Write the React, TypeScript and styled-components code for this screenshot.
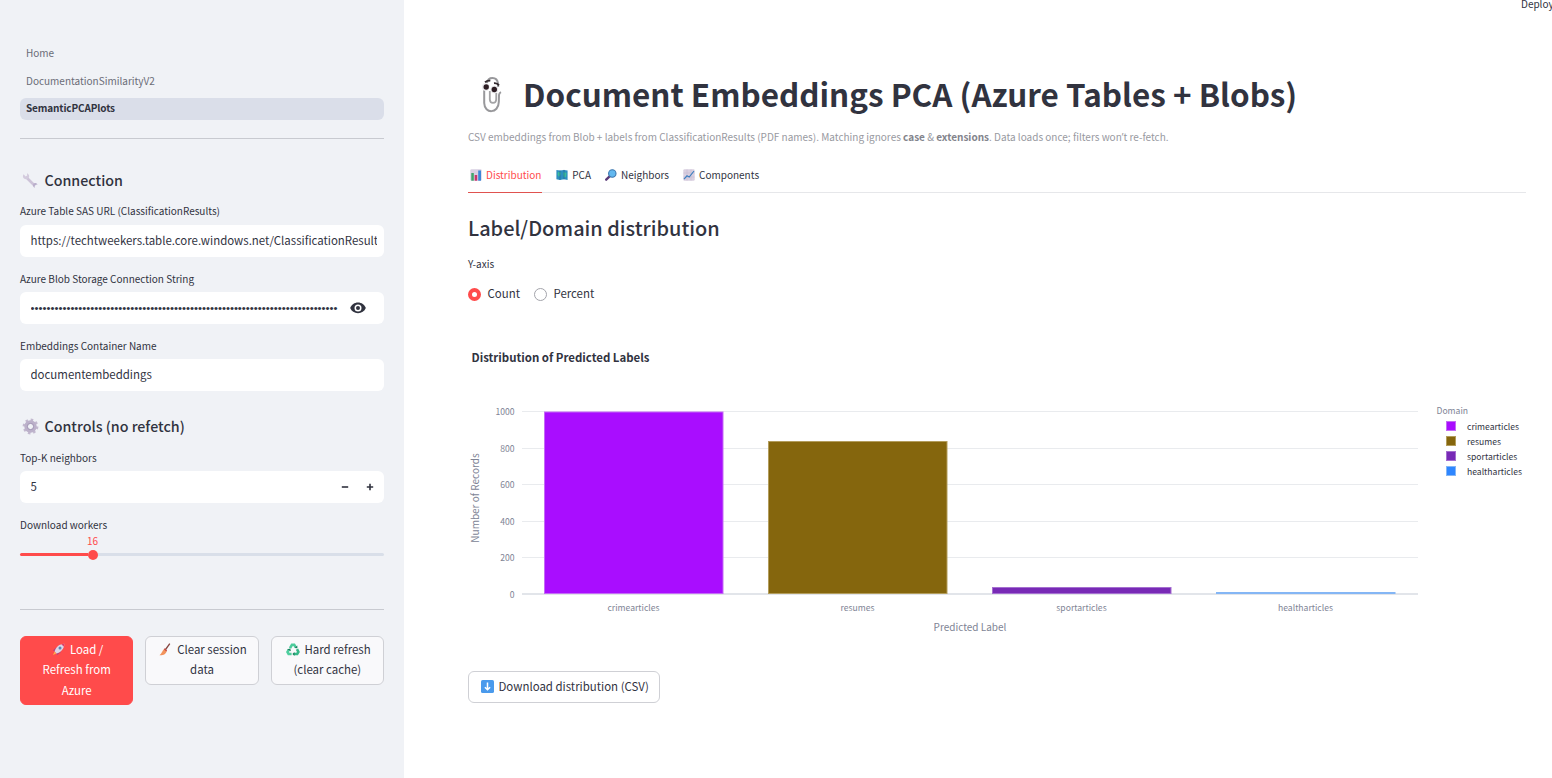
import React from "react";
import styled, { createGlobalStyle, css } from "styled-components";

const ink = "#31333f";
const red = "#ff4b4b";

const Global = createGlobalStyle`
  *, *::before, *::after { box-sizing: border-box; }
  html, body { margin: 0; padding: 0; overflow: hidden; }
  body {
    font-family: "Noto Sans CJK SC", "Noto Sans", sans-serif;
    font-size: 11.45px;
    color: ${ink};
    background: #fff;
  }
  svg { display: block; flex: none; }
`;

const Page = styled.div`
  display: flex;
  width: 1552px;
  height: 778px;
  overflow: hidden;
`;

const Sidebar = styled.aside`
  width: 404px;
  flex: none;
  padding: 42px 20px 0;
  background: #f0f2f6;
`;

const Nav = styled.nav`
  display: flex;
  flex-direction: column;
  gap: 6px;
`;

const NavItem = styled.a<{ $active?: boolean }>`
  height: 22px;
  padding-left: 6px;
  border-radius: 6px;
  font-size: 10px;
  line-height: 21px;
  color: #6a6c76;
  ${(p) => p.$active && css`
    color: ${ink};
    font-weight: 700;
    letter-spacing: -0.13px;
    line-height: 19px;
    background: #dadee9;
  `}
`;

const Rule = styled.hr<{ $top: number }>`
  height: 1px;
  margin: ${(p) => p.$top}px 0 0;
  border: 0;
  background: #c8cad0;
`;

const SideHeading = styled.h3<{ $top: number }>`
  display: flex;
  align-items: center;
  gap: 5.5px;
  height: 20px;
  margin: ${(p) => p.$top}px 0 0;
  padding-left: 2px;
  font-size: 14.25px;
  font-weight: 500;
  line-height: 20px;
`;

const Field = styled.div<{ $top: number }>`
  margin-top: ${(p) => p.$top}px;
`;

const Label = styled.label<{ $height?: number }>`
  display: block;
  height: ${(p) => p.$height ?? 20}px;
  font-size: 10px;
  line-height: 14px;
`;

const Input = styled.div<{ $end?: number }>`
  display: flex;
  align-items: center;
  height: 32px;
  padding: 0 ${(p) => p.$end ?? 7}px 0 10.5px;
  border-radius: 6px;
  background: #fff;
`;

const Value = styled.span`
  flex: 1;
  overflow: hidden;
  white-space: nowrap;
  font-size: 11.44px;
  line-height: 20px;
  padding-bottom: 2px;
`;

const Secret = styled(Value)`
  font-family: "Liberation Sans", sans-serif;
  font-size: 11.4px;
  padding-bottom: 0;
`;

const Stepper = styled.div`
  display: flex;
  gap: 17px;
  padding-right: 3px;
`;

const SliderValue = styled.div`
  width: 145px;
  height: 14px;
  text-align: center;
  font-size: 10px;
  line-height: 13px;
  color: ${red};
`;

const Track = styled.div`
  display: flex;
  align-items: center;
  height: 14px;
  &::before { content: ""; width: 67.5px; height: 3px; border-radius: 2px 0 0 2px; background: ${red}; }
  &::after { content: ""; flex: 1; height: 3px; border-radius: 0 2px 2px 0; background: #d9dfe9; }
`;

const Thumb = styled.i`
  width: 10px;
  height: 10px;
  border-radius: 50%;
  background: ${red};
`;

const Actions = styled.div`
  display: grid;
  grid-template-columns: repeat(3, 1fr);
  gap: 12px;
  align-items: start;
  margin-top: 26px;
`;

const Button = styled.button<{ $primary?: boolean }>`
  display: flex;
  flex-direction: column;
  align-items: center;
  padding: 2px 0 4px;
  border: 1px solid ${(p) => (p.$primary ? red : "#cfd0d5")};
  border-radius: 6px;
  font: inherit;
  font-size: 11.45px;
  line-height: 20.4px;
  white-space: nowrap;
  color: ${(p) => (p.$primary ? "#fff" : ink)};
  background: ${(p) => (p.$primary ? red : "#f9f9fb")};
`;

const Line = styled.span<{ $gap?: number }>`
  display: flex;
  align-items: center;
  gap: ${(p) => p.$gap ?? 5}px;
  padding-left: ${(p) => (p.$gap ? 2 : 0)}px;
`;

const Main = styled.main`
  position: relative;
  flex: 1;
  padding: 71px 26px 0 64px;
`;

const Deploy = styled.span`
  position: absolute;
  top: -4px;
  left: 1117px;
  font-size: 10px;
  line-height: 16px;
`;

const Title = styled.h1`
  display: flex;
  align-items: center;
  height: 46px;
  margin: 0;
  padding-left: 2px;
  gap: 17px;
  font-size: 31.45px;
  font-weight: 700;
  line-height: 46px;
  white-space: nowrap;
  svg { margin-top: 2px; }
`;

const Caption = styled.p`
  height: 16px;
  margin: 12px 0 0;
  font-size: 10.01px;
  line-height: 16px;
  color: #98999f;
  white-space: nowrap;
  b { color: #83848c; }
`;

const Quote = styled.span`
  font-family: "Open Sans", sans-serif;
`;

const Tabs = styled.div`
  display: flex;
  gap: 12px;
  height: 33px;
  margin-top: 15px;
  border-bottom: 1px solid #e6e7ea;
`;

const Tab = styled.div<{ $active?: boolean }>`
  display: flex;
  align-items: center;
  gap: 4px;
  height: 33px;
  padding: 0 ${(p) => (p.$active ? 0.8 : 0)}px 3px 2px;
  font-size: 10px;
  color: ${(p) => (p.$active ? red : ink)};
  border-bottom: 1px solid ${(p) => (p.$active ? "#e0524f" : "transparent")};
`;

const SectionTitle = styled.h2`
  height: 30px;
  margin: 20px 0 0;
  font-size: 19.95px;
  font-weight: 500;
  line-height: 30px;
`;

const AxisLabel = styled.div`
  height: 14px;
  margin-top: 14px;
  font-size: 10px;
  line-height: 14px;
`;

const Radios = styled.div`
  display: flex;
  gap: 14px;
  height: 20px;
  margin-top: 13px;
`;

const Radio = styled.label<{ $on?: boolean }>`
  display: flex;
  align-items: center;
  gap: 6.5px;
  line-height: 18px;
  span { padding-bottom: 2px; }
  &::before {
    content: "";
    width: 13px;
    height: 13px;
    border-radius: 50%;
    background: #fff;
    border: ${(p) => (p.$on ? `4px solid ${red}` : "1px solid #a3a4ab")};
  }
`;

const Chart = styled.svg`
  margin-top: 26px;
  overflow: visible;
`;

const Download = styled(Button)`
  flex-direction: row;
  gap: 5px;
  width: 192px;
  height: 32px;
  margin-top: 21px;
  padding: 0 0 1px 11.5px;
  background: #fff;
`;

const Wrench = () => (
  <svg width="17" height="17" viewBox="0 0 17 17">
    <path d="M5 6 12 13" stroke="#cdc3d8" strokeWidth="2.6" />
    <path d="M1.6 2.2A3.1 3.1 0 1 0 5 1.2L5.2 3.6 3.6 4.6Z" fill="#d3cbdd" />
    <path d="M15.6 12.6A2.4 2.4 0 1 0 13 15.8L12.6 14.1 14 12.8Z" fill="#b9aecb" />
  </svg>
);

const Gear = () => (
  <svg width="17" height="17" viewBox="0 0 17 17">
    <circle cx="8.5" cy="8.5" r="6.7" fill="none" stroke="#c3b9cf" strokeWidth="2.4" strokeDasharray="2.5 2.76" />
    <circle cx="8.5" cy="8.5" r="4.6" fill="none" stroke="#bcb1ca" strokeWidth="3.2" />
    <circle cx="8.5" cy="8.5" r="3.1" fill="none" stroke="#9a8cae" strokeWidth=".9" />
  </svg>
);

const Eye = () => (
  <svg width="16" height="12" viewBox="0 0 16 12">
    <path d="M8 .6C4.4.6 1.5 2.8.2 6 1.5 9.2 4.4 11.2 8 11.2S14.5 9.2 15.8 6C14.5 2.8 11.6.6 8 .6Z" fill={ink} />
    <circle cx="8" cy="6" r="3.5" fill="#fff" />
    <circle cx="8" cy="6" r="2" fill={ink} />
  </svg>
);

const Sign = ({ plus }: { plus?: boolean }) => (
  <svg width="8" height="8" viewBox="0 0 8 8" stroke={ink} strokeWidth="1.6">
    <path d={plus ? "M.8 4H7.2M4 .8V7.2" : "M.8 4H7.2"} />
  </svg>
);

const Rocket = () => (
  <svg width="13" height="13" viewBox="0 0 13 13">
    <path d="M.8 7.500 4 4.500 6.500 6 4.500 9ZM5 12.300 9 9 7 6.500 4 8.500Z" fill="#b8457a" />
    <path d="M2.600 8.600C3.600 4 7.500.8 12.300.7 12.200 5.500 9 9.600 4.400 10.400Z" fill="#ddd5e6" />
    <path d="M9.300 1.200 12.300.7 11.800 3.700Z" fill="#d9406b" />
    <circle cx="8" cy="5" r="1.500" fill="#5a86b8" />
    <path d="M1 12 2.500 8.800 4.200 10.500Z" fill="#ffb04b" />
  </svg>
);

const Broom = () => (
  <svg width="12" height="13" viewBox="0 0 12 13">
    <path d="M6.2 7 10.8.6" stroke="#84443f" strokeWidth="1.3" />
    <path d="M5.2 6 7.6 8C7.3 11 4.5 12.5.5 12.3 2.8 10.5 3.4 7.5 5.2 6Z" fill="#f2935c" />
    <path d="M5.2 5.8 7.7 8" stroke="#c9483f" strokeWidth="1.2" />
  </svg>
);

const Recycle = () => (
  <svg width="14" height="13" viewBox="0 0 14 13" fill="none" strokeWidth="2.6">
    <path d="M4 5.2 6 1.8H8.2L9.6 4.2" stroke="#4ccb9b" />
    <path d="M11 6.2 12.4 9 11.2 11H8" stroke="#36b888" />
    <path d="M5.6 11H2.6L1.5 9 3 6.4" stroke="#4fce9e" />
    <path d="M8.4 5 11.4 5.3 11.3 2.4ZM8.4 9V13L6.4 11ZM1.2 6.3 4.3 5.4 4.9 8.2Z" fill="#17805e" />
  </svg>
);

const Clip = () => (
  <svg width="36" height="40" viewBox="0 0 36 40" fill="none">
    <path d="M17 8C18 1.5 27 1 28 8.500L28.200 12M14.200 13.500V28C14.500 39 28.500 39 28.800 27L29 20Q29.200 18 31 17.200" stroke="#98989b" strokeWidth="2" />
    <path d="M19.800 16V24.500C20 29 26 29 26.200 24.500L26.300 18" stroke="#a4a4a6" strokeWidth="1.800" />
    <circle cx="15.800" cy="12" r="3.900" fill="#ececee" />
    <circle cx="24.300" cy="14.500" r="3.800" fill="#e4e4e6" />
    <circle cx="16.200" cy="12" r="2.700" fill="#2c1c22" />
    <circle cx="24.300" cy="14.500" r="2.700" fill="#2c1c22" />
    <path d="M15 7.300Q17.500 5.200 20.300 5.700M24 8.200Q27 7.800 29 10.300" stroke="#332a2e" strokeWidth="1.900" />
  </svg>
);

const BarsIcon = () => (
  <svg width="12" height="12" viewBox="0 0 12 12">
    <rect x=".3" y=".3" width="11.4" height="11.4" rx="1.3" fill="#d8cfe2" />
    <rect x="1.3" y="4" width="2.5" height="7.7" fill="#3fa66b" />
    <rect x="4.7" y="6" width="2.5" height="5.7" fill="#c8346c" />
    <rect x="8.2" y="1.5" width="2.8" height="10.2" fill="#3e86d6" />
  </svg>
);

const MapIcon = () => (
  <svg width="12" height="12" viewBox="0 0 12 12">
    <path d="M.4.9 4 1.500 8 .9 11.600 1.500V10.900L8 10.300 4 10.900 .4 10.300Z" fill="#2d8fc0" />
    <path d="M2 3 5 3.500 4.500 6 3 8 1.500 5.500ZM7.500 3 10.500 4 10 8 8 8.500 7 5Z" fill="#3bbd9a" />
    <path d="M4 1.500V10.900M8 .9V10.300" stroke="#24659a" strokeWidth=".7" />
  </svg>
);

const Magnifier = () => (
  <svg width="12" height="12" viewBox="0 0 12 12">
    <path d="M1.200 10.700 4.600 7.400" stroke="#5b3a78" strokeWidth="2.300" strokeLinecap="round" />
    <circle cx="7.300" cy="4.500" r="3.700" fill="#62b8ef" stroke="#3c76ad" strokeWidth="1.100" />
  </svg>
);

const TrendIcon = () => (
  <svg width="12" height="12" viewBox="0 0 12 12">
    <rect x=".3" y=".3" width="11.4" height="11.4" rx="1.3" fill="#d9cfe0" />
    <path d="M.5 4H11.5M.5 8H11.5M4 .5V11.5M8 .5V11.5" stroke="#c2b5ce" strokeWidth=".5" />
    <path d="M1 10.2 4 6.8 6.2 8 11 2" stroke="#3d7fc0" strokeWidth="1.2" fill="none" />
  </svg>
);

const DownIcon = () => (
  <svg width="13" height="13" viewBox="0 0 13 13">
    <rect width="13" height="13" rx="1.6" fill="#4a9aec" />
    <path d="M6.5 2.5V9.5M3.9 7.2 6.5 9.8 9.1 7.2" stroke="#fff" strokeWidth="1.5" fill="none" />
  </svg>
);

const series = [
  { name: "crimearticles", color: "#a90dff", edge: "#c56bf5", top: 82 },
  { name: "resumes", color: "#85660d", edge: "#b39d5c", top: 111.5 },
  { name: "sportarticles", color: "#782ab6", edge: "#a56fd0", top: 257.5 },
  { name: "healtharticles", color: "#2e86ff", edge: "#84b6f5", top: 262.5 },
];
const ticks = [
  { v: 0, y: 264 }, { v: 200, y: 227.5 }, { v: 400, y: 191.5 },
  { v: 600, y: 154.5 }, { v: 800, y: 118.5 }, { v: 1000, y: 81.5 },
];

const Distribution = () => (
  <Chart width="1058" height="320" viewBox="0 0 1058 320">
    <text x="3.5" y="32" fontSize="11.45" fontWeight="700" fill={ink}>Distribution of Predicted Labels</text>
    {ticks.map((t) => (
      <g key={t.v}>
        <line x1="54" x2="950" y1={t.y} y2={t.y} stroke={t.v ? "#e9ebee" : "#e2e5ea"} strokeWidth={t.v ? 1 : 2} />
        <text x="46.5" y={t.y + 3.5} fontSize="8.6" textAnchor="end" fill="#808495">{t.v}</text>
      </g>
    ))}
    {series.map((s, i) => (
      <g key={s.name}>
        <rect x={76.5 + i * 224} y={s.top} width="178.5" height={263.5 - s.top} fill={s.color} stroke={s.edge} strokeWidth="1" />
        <text x={165.5 + i * 224} y="281" fontSize="8.6" textAnchor="middle" fill="#808495">{s.name}</text>
        <rect x="978.5" y={91.5 + i * 15} width="9" height="9" fill={s.color} stroke={s.edge} />
        <text x="999" y={100 + i * 15} fontSize="8.6" fill={ink}>{s.name}</text>
      </g>
    ))}
    <text x="502" y="301" fontSize="10" textAnchor="middle" fill="#808495">Predicted Label</text>
    <text transform="translate(11 168) rotate(-90)" fontSize="10" textAnchor="middle" fill="#808495">Number of Records</text>
    <text x="968.5" y="84" fontSize="8.6" fill="#808495">Domain</text>
  </Chart>
);

export default function App() {
  return (
    <Page>
      <Global />
      <Sidebar>
        <Nav>
          <NavItem>Home</NavItem>
          <NavItem>DocumentationSimilarityV2</NavItem>
          <NavItem $active>SemanticPCAPlots</NavItem>
        </Nav>
        <Rule $top={18} />
        <SideHeading $top={31}><Wrench />Connection</SideHeading>
        <Field $top={14}>
          <Label $height={21}>Azure Table SAS URL (ClassificationResults)</Label>
          <Input><Value>https://techtweekers.table.core.windows.net/ClassificationResults</Value></Input>
        </Field>
        <Field $top={15}>
          <Label>Azure Blob Storage Connection String</Label>
          <Input $end={18}><Secret>{"•".repeat(77)}</Secret><Eye /></Input>
        </Field>
        <Field $top={15}>
          <Label>Embeddings Container Name</Label>
          <Input><Value>documentembeddings</Value></Input>
        </Field>
        <SideHeading $top={25}><Gear />Controls (no refetch)</SideHeading>
        <Field $top={15}>
          <Label>Top-K neighbors</Label>
          <Input>
            <Value>5</Value>
            <Stepper><Sign /><Sign plus /></Stepper>
          </Input>
        </Field>
        <Field $top={15}>
          <Label $height={15.5}>Download workers</Label>
          <SliderValue>16</SliderValue>
          <Track><Thumb /></Track>
        </Field>
        <Rule $top={47.5} />
        <Actions>
          <Button $primary>
            <Line $gap={5}><Rocket />Load /</Line>
            <Line>Refresh from</Line>
            <Line>Azure</Line>
          </Button>
          <Button>
            <Line $gap={6}><Broom />Clear session</Line>
            <Line>data</Line>
          </Button>
          <Button>
            <Line $gap={4.5}><Recycle />Hard refresh</Line>
            <Line>(clear cache)</Line>
          </Button>
        </Actions>
      </Sidebar>
      <Main>
        <Deploy>Deploy</Deploy>
        <Title><Clip />Document Embeddings PCA (Azure Tables + Blobs)</Title>
        <Caption>
          CSV embeddings from Blob + labels from ClassificationResults (PDF names). Matching ignores <b>case</b> &amp; <b>extensions</b>. Data loads once; filters won<Quote>’</Quote>t re-fetch.
        </Caption>
        <Tabs>
          <Tab $active><BarsIcon />Distribution</Tab>
          <Tab><MapIcon />PCA</Tab>
          <Tab><Magnifier />Neighbors</Tab>
          <Tab><TrendIcon />Components</Tab>
        </Tabs>
        <SectionTitle>Label/Domain distribution</SectionTitle>
        <AxisLabel>Y-axis</AxisLabel>
        <Radios>
          <Radio $on><span>Count</span></Radio>
          <Radio><span>Percent</span></Radio>
        </Radios>
        <Distribution />
        <Download><DownIcon />Download distribution (CSV)</Download>
      </Main>
    </Page>
  );
}
